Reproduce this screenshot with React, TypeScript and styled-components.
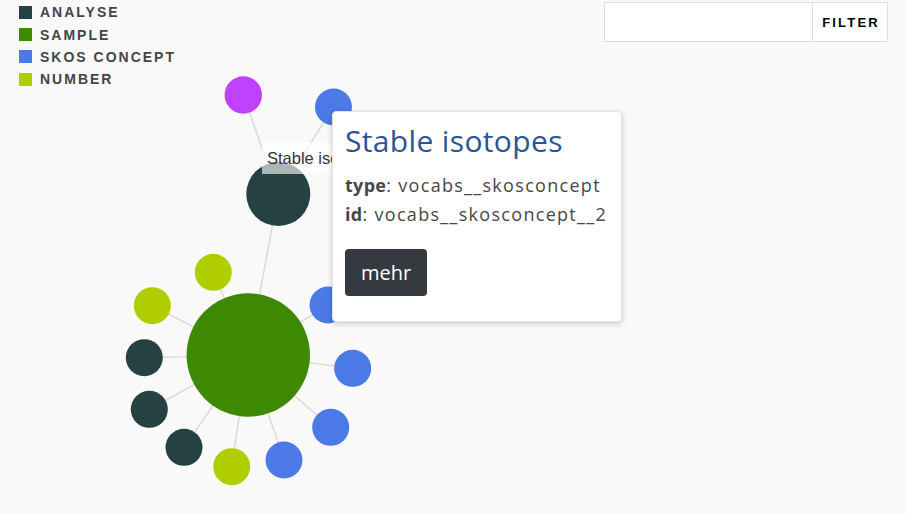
import React from "react";
import styled, { createGlobalStyle } from "styled-components";

const GlobalStyle = createGlobalStyle`
  html, body { margin: 0; padding: 0; background: #ffffff; }
  body { font-family: "Liberation Sans", Arial, sans-serif; }
`;

const COLORS = {
  analyse: "#254141",
  sample: "#3d8a02",
  skos: "#4b79e6",
  number: "#b0cd00",
  other: "#c042fe",
};

type NodeT = { id: string; x: number; y: number; r: number; color: string };

const nodes: NodeT[] = [
  { id: "purple", x: 243.3, y: 95, r: 18.7, color: COLORS.other },
  { id: "blueTop", x: 333.5, y: 107, r: 18.5, color: COLORS.skos },
  { id: "darkTop", x: 278.3, y: 194, r: 32, color: COLORS.analyse },
  { id: "green", x: 248.3, y: 355, r: 61.7, color: COLORS.sample },
  { id: "l1", x: 213.3, y: 272.3, r: 18.5, color: COLORS.number },
  { id: "l2", x: 152.3, y: 305.7, r: 18.5, color: COLORS.number },
  { id: "d1", x: 144.3, y: 357.7, r: 18.5, color: COLORS.analyse },
  { id: "d2", x: 149.3, y: 409.3, r: 18.5, color: COLORS.analyse },
  { id: "d3", x: 184, y: 447.3, r: 18.5, color: COLORS.analyse },
  { id: "l3", x: 231.7, y: 466.7, r: 18.5, color: COLORS.number },
  { id: "b1", x: 284, y: 460, r: 18.5, color: COLORS.skos },
  { id: "b2", x: 330.7, y: 427.3, r: 18.5, color: COLORS.skos },
  { id: "b3", x: 352.7, y: 368.3, r: 18.5, color: COLORS.skos },
  { id: "b4", x: 328, y: 305, r: 18.5, color: COLORS.skos },
];

const edges: [string, string][] = [
  ["purple", "darkTop"],
  ["blueTop", "darkTop"],
  ["darkTop", "green"],
  ["green", "l1"],
  ["green", "l2"],
  ["green", "d1"],
  ["green", "d2"],
  ["green", "d3"],
  ["green", "l3"],
  ["green", "b1"],
  ["green", "b2"],
  ["green", "b3"],
  ["green", "b4"],
];

const legend = [
  { label: "ANALYSE", color: COLORS.analyse },
  { label: "SAMPLE", color: COLORS.sample },
  { label: "SKOS CONCEPT", color: COLORS.skos },
  { label: "NUMBER", color: COLORS.number },
];

const Page = styled.div`
  width: 918px;
  height: 514px;
  display: flex;
  background: #ffffff;
`;

const Stage = styled.div`
  position: relative;
  width: 905px;
  height: 514px;
  background: #f9f9f9;
  overflow: hidden;
`;

const GraphSvg = styled.svg`
  position: absolute;
  inset: 0;
  width: 905px;
  height: 514px;
`;

const Legend = styled.ul`
  position: absolute;
  left: 19px;
  top: 1px;
  margin: 0;
  padding: 0;
  list-style: none;
  display: flex;
  flex-direction: column;
`;

const LegendRow = styled.li`
  height: 22.4px;
  display: flex;
  align-items: center;
  gap: 8px;
`;

const Swatch = styled.span<{ $color: string }>`
  width: 13px;
  height: 13px;
  background: ${(p) => p.$color};
`;

const LegendLabel = styled.span`
  font-family: "Liberation Sans", Arial, sans-serif;
  font-weight: 700;
  font-size: 14px;
  letter-spacing: 2px;
  color: #454545;
`;

const FilterBar = styled.form`
  position: absolute;
  top: 2px;
  right: 17px;
  display: flex;
  height: 40px;
  border: 1px solid #dddddd;
  background: #ffffff;
  box-sizing: border-box;
`;

const FilterInput = styled.input`
  width: 208px;
  border: none;
  border-right: 1px solid #dddddd;
  outline: none;
  background: #ffffff;
  padding: 0 8px;
  box-sizing: border-box;
`;

const FilterButton = styled.button`
  width: 74px;
  border: none;
  background: #ffffff;
  font-family: "Liberation Sans", Arial, sans-serif;
  font-weight: 700;
  font-size: 13px;
  letter-spacing: 2.2px;
  color: #000000;
  padding: 0 0 0 2px;
`;

const NodeLabel = styled.div`
  position: absolute;
  left: 262px;
  top: 142px;
  height: 32px;
  padding: 0 8px 0 5px;
  display: flex;
  align-items: center;
  background: rgba(255, 255, 255, 0.62);
  font-family: "Liberation Sans", Arial, sans-serif;
  font-size: 16.5px;
  color: #333333;
  white-space: nowrap;
`;

const Tooltip = styled.div`
  position: absolute;
  left: 332px;
  top: 111px;
  width: 290px;
  height: 211px;
  box-sizing: border-box;
  padding: 10px 12px 0 12px;
  background: #ffffff;
  border: 1px solid #e3e3e3;
  border-radius: 4px;
  box-shadow: 0 2px 6px rgba(0, 0, 0, 0.18);
  font-family: "Open Sans", sans-serif;
  display: flex;
  flex-direction: column;
  align-items: flex-start;
`;

const TooltipTitle = styled.h3`
  margin: 0 0 11px 0;
  font-family: "Open Sans", sans-serif;
  font-weight: 400;
  font-size: 30px;
  letter-spacing: 0.35px;
  line-height: 38px;
  color: #2a5594;
  white-space: nowrap;
`;

const Field = styled.div`
  font-size: 18px;
  line-height: 29px;
  font-weight: 400;
  letter-spacing: 1.3px;
  color: #474747;
  white-space: nowrap;
`;

const FieldKey = styled.b`
  font-weight: 700;
  letter-spacing: 0.3px;
`;

const MoreButton = styled.button`
  margin-top: 20px;
  height: 47px;
  padding: 0 16px;
  border: none;
  border-radius: 4px;
  background: #343a40;
  color: #ffffff;
  font-family: "Open Sans", sans-serif;
  font-size: 20px;
  line-height: 47px;
`;

export default function App() {
  const byId = Object.fromEntries(nodes.map((n) => [n.id, n]));
  return (
    <Page>
      <GlobalStyle />
      <Stage>
        <GraphSvg viewBox="0 0 905 514">
          {edges.map(([a, b]) => (
            <line
              key={a + b}
              x1={byId[a].x}
              y1={byId[a].y}
              x2={byId[b].x}
              y2={byId[b].y}
              stroke="#dcdcdc"
              strokeWidth={1.6}
            />
          ))}
          {nodes.map((n) => (
            <circle key={n.id} cx={n.x} cy={n.y} r={n.r} fill={n.color} />
          ))}
        </GraphSvg>
        <Legend>
          {legend.map((l) => (
            <LegendRow key={l.label}>
              <Swatch $color={l.color} />
              <LegendLabel>{l.label}</LegendLabel>
            </LegendRow>
          ))}
        </Legend>
        <FilterBar onSubmit={(e) => e.preventDefault()}>
          <FilterInput type="text" />
          <FilterButton type="submit">FILTER</FilterButton>
        </FilterBar>
        <NodeLabel>Stable isotopes</NodeLabel>
        <Tooltip>
          <TooltipTitle>Stable isotopes</TooltipTitle>
          <Field>
            <FieldKey>type</FieldKey>: vocabs__skosconcept
          </Field>
          <Field>
            <FieldKey>id</FieldKey>: vocabs__skosconcept__2
          </Field>
          <MoreButton type="button">mehr</MoreButton>
        </Tooltip>
      </Stage>
    </Page>
  );
}
